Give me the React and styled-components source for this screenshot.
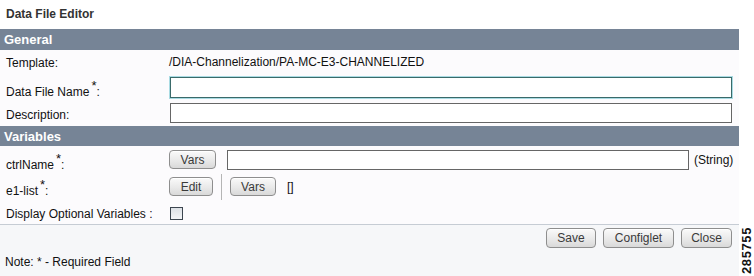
import React from "react";
import styled, { createGlobalStyle } from "styled-components";

const Global = createGlobalStyle`
  html, body { margin: 0; padding: 0; background: #ffffff; }
  body { font-family: "Liberation Sans", Arial, sans-serif; font-size: 12px; color: #111; }
`;

const Page = styled.div`
  position: relative;
  width: 754px;
  height: 276px;
  overflow: hidden;
  background: #ffffff;
`;

const Title = styled.div`
  height: 29px;
  display: flex;
  align-items: center;
  padding-left: 6px;
  padding-bottom: 2px;
  box-sizing: border-box;
  font-weight: bold;
  font-size: 12px;
  color: #333;
`;

const Panel = styled.div`
  width: 739px;
  background: #fcfbfd;
`;

const SectionBar = styled.div`
  height: ${(p) => p.$h}px;
  background: #768496;
  color: #fff;
  font-weight: bold;
  font-size: 13px;
  display: flex;
  align-items: center;
  padding-left: 4px;
`;

const Row = styled.div`
  height: ${(p) => p.$h}px;
  display: grid;
  grid-template-columns: 169px 1fr;
  align-items: center;
`;

const Label = styled.div`
  padding-left: 6px;
  font-size: 12px;
  color: #111;
  padding-top: ${(p) => p.$pt || 0}px;
`;

const Star = styled.sup`
  font-size: 13px;
  vertical-align: 0;
  position: relative;
  top: -6px;
  margin-left: 2px;
`;

const Value = styled.div`
  display: flex;
  align-items: center;
  gap: ${(p) => p.$gap || 0}px;
  padding-right: 7px;
`;

const TextInput = styled.input`
  box-sizing: border-box;
  height: ${(p) => p.$h}px;
  width: ${(p) => (p.$w ? `${p.$w}px` : "100%")};
  margin: 0 0 0 ${(p) => (p.$ml !== undefined ? p.$ml : 1)}px;
  padding: 0;
  background: #fff;
  border: 1px solid ${(p) => (p.$focus ? "#3a6a6a" : "#666")};
  box-shadow: ${(p) => (p.$focus ? "0 0 0 1px #a9dbe3" : "none")};
  outline: none;
`;

const Btn = styled.button`
  box-sizing: border-box;
  height: ${(p) => p.$h || 19}px;
  width: ${(p) => p.$w}px;
  padding: 0;
  font-family: "Liberation Sans", Arial, sans-serif;
  font-size: 12px;
  color: #3a3a3a;
  border: 1px solid #8e8e8e;
  border-radius: 4px;
  background: linear-gradient(#fafafa, #e9e9e9 55%, #d9d9d9);
  box-shadow: inset 0 1px 0 #fff;
`;

const VSep = styled.div`
  width: 1px;
  height: 26px;
  background: #b5b5b5;
`;

const Plain = styled.span`
  font-size: 12px;
  color: #111;
  white-space: nowrap;
  margin-left: ${(p) => p.$ml || 0}px;
`;

const Check = styled.div`
  box-sizing: border-box;
  width: 13px;
  height: 13px;
  margin-left: 1px;
  margin-top: 2px;
  border: 1px solid #3d4650;
  background: linear-gradient(#dde1e6, #f4f5f7);
`;

const Footer = styled.div`
  width: 739px;
  border-top: 1px solid #c6ccd4;
  background: #f6f7f9;
  height: 52px;
  display: flex;
  flex-direction: column;
`;

const Actions = styled.div`
  display: flex;
  justify-content: flex-end;
  gap: 7px;
  padding: 3px 7px 0 0;
`;

const Note = styled.div`
  padding: 7px 0 0 5px;
  font-size: 12px;
  color: #111;
`;

const FigId = styled.div`
  position: absolute;
  left: 740px;
  top: 228px;
  width: 13px;
  height: 45px;
  display: flex;
  align-items: center;
  justify-content: center;
`;

const FigText = styled.span`
  transform: rotate(-90deg);
  font-size: 13px;
  font-weight: bold;
  color: #111;
  letter-spacing: 0.6px;
  white-space: nowrap;
`;

export default function App() {
  return (
    <Page>
      <Global />
      <Title>Data File Editor</Title>
      <Panel>
        <SectionBar $h={21}>General</SectionBar>
        <Row $h={24}>
          <Label $pt={2}>Template:</Label>
          <Value><Plain>/DIA-Channelization/PA-MC-E3-CHANNELIZED</Plain></Value>
        </Row>
        <Row $h={26}>
          <Label $pt={9}>Data File Name<Star>*</Star>:</Label>
          <Value><TextInput $h={21} $focus /></Value>
        </Row>
        <Row $h={26}>
          <Label $pt={3}>Description:</Label>
          <Value><TextInput $h={20} /></Value>
        </Row>
        <SectionBar $h={20}>Variables</SectionBar>
        <Row $h={27}>
          <Label $pt={9}>ctrlName<Star>*</Star>:</Label>
          <Value $gap={11}>
            <Btn $w={47}>Vars</Btn>
            <TextInput $h={20} $w={462} $ml={0} />
            <Plain $ml={-6}>(String)</Plain>
          </Value>
        </Row>
        <Row $h={27}>
          <Label $pt={7}>e1-list<Star>*</Star>:</Label>
          <Value $gap={8}>
            <Btn $w={44}>Edit</Btn>
            <VSep />
            <Btn $w={46}>Vars</Btn>
            <Plain $ml={3}>[]</Plain>
          </Value>
        </Row>
        <Row $h={24}>
          <Label $pt={3}>Display Optional Variables :</Label>
          <Value><Check /></Value>
        </Row>
      </Panel>
      <Footer>
        <Actions>
          <Btn $w={50} $h={20}>Save</Btn>
          <Btn $w={71} $h={20}>Configlet</Btn>
          <Btn $w={51} $h={20}>Close</Btn>
        </Actions>
        <Note>Note: * - Required Field</Note>
      </Footer>
      <FigId><FigText>285755</FigText></FigId>
    </Page>
  );
}
